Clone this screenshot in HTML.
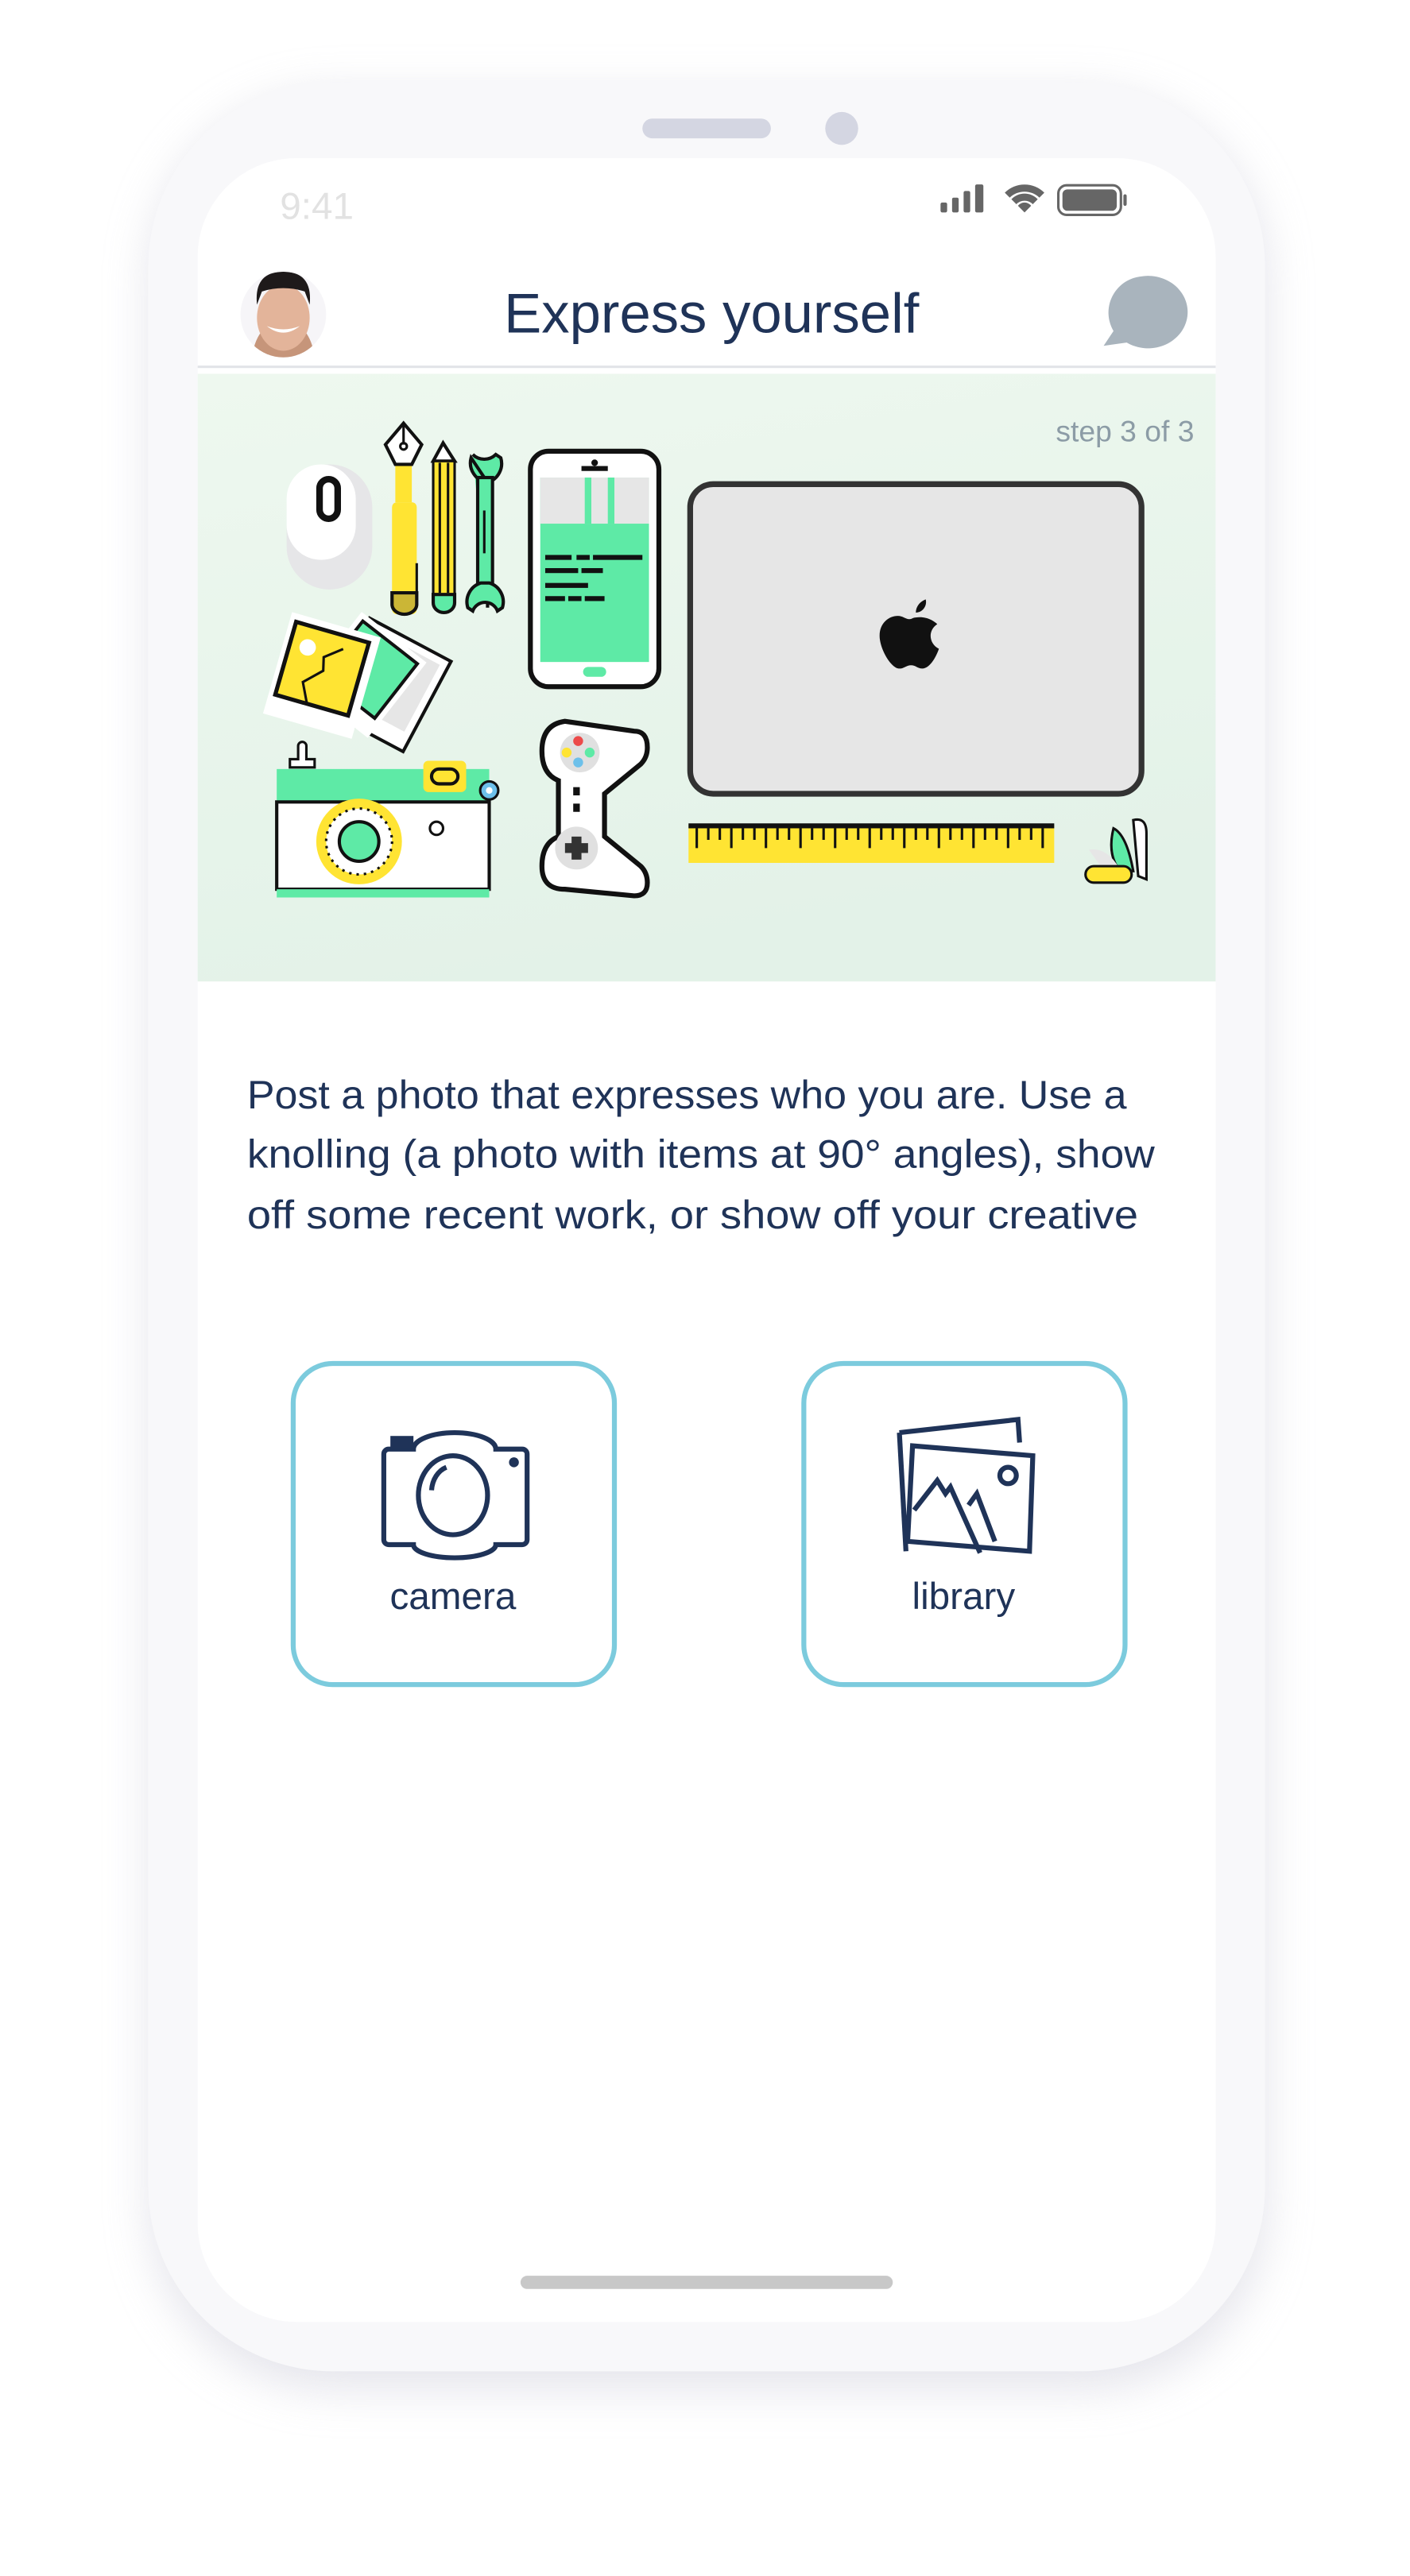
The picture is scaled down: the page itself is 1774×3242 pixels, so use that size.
<!DOCTYPE html>
<html><head><meta charset="utf-8"><style>
html,body{margin:0;padding:0;background:#fff;}
svg{display:block}
</style></head><body>
<svg width="1774" height="3242" viewBox="0 0 856 1564.3" preserveAspectRatio="none" xmlns="http://www.w3.org/2000/svg" font-family="Liberation Sans, sans-serif">
<defs>
<filter id="sh" x="-20%" y="-20%" width="140%" height="140%"><feGaussianBlur stdDeviation="14"/></filter>
<linearGradient id="gg" x1="0" y1="0" x2="0.3" y2="1"><stop offset="0" stop-color="#eef8ef"/><stop offset="1" stop-color="#e3f2e8"/></linearGradient>
<clipPath id="av"><circle cx="172" cy="191" r="26"/></clipPath>
</defs>
<rect width="856" height="1564.3" fill="#fff"/>
<!-- phone body -->
<rect x="92" y="58" width="676" height="1392" rx="110" fill="#d8d8e2" filter="url(#sh)" opacity="0.7"/>
<rect x="90" y="50" width="678" height="1390" rx="112" fill="#f8f8fa"/>
<rect x="120" y="96" width="618" height="1314" rx="60" fill="#fff"/>
<rect x="390" y="72" width="78" height="12" rx="6" fill="#d4d6e2"/>
<circle cx="511" cy="78" r="10" fill="#d4d6e2"/>
<!-- status -->
<text x="170" y="133" font-size="23" fill="#e2e2e2">9:41</text>
<g fill="#666">
<rect x="571" y="123" width="4" height="6" rx="1"/><rect x="578" y="120" width="4" height="9" rx="1"/><rect x="585" y="116" width="4" height="13" rx="1"/><rect x="592" y="112" width="5" height="17" rx="1"/>
<path d="M610 117 a17 17 0 0 1 24 0 l-3 3 a13 13 0 0 0 -18 0z M614 121 a11 11 0 0 1 16 0 l-3 3 a7 7 0 0 0 -10 0z M618 125 l4 4 l4 -4 a5 5 0 0 0 -8 0z"/>
<rect x="642.5" y="112.5" width="38" height="18" rx="5" fill="none" stroke="#666" stroke-width="1.5"/>
<rect x="645" y="115" width="33" height="13" rx="3"/>
<rect x="682" y="118" width="2" height="7" rx="1"/>
</g>
<!-- header -->
<circle cx="172" cy="191" r="26" fill="#f6f5f8"/>
<g clip-path="url(#av)">
<path d="M152 230 q0 -22 8 -30 l24 0 q8 8 8 30z" fill="#c6957a"/>
<ellipse cx="172" cy="193" rx="16" ry="20" fill="#e3b49a"/>
<path d="M156 185 q-2 -20 16 -20 q18 0 16 20 l-3 -8 q-13 -4 -26 0z" fill="#1e1a1a"/>
<path d="M162 198 q10 8 20 0 q-10 4 -20 0z" fill="#fff"/>
</g>
<text x="432" y="202" font-size="34" fill="#1f3358" text-anchor="middle" textLength="252" lengthAdjust="spacingAndGlyphs">Express yourself</text>
<path d="M692 168 a24 22 0 1 1 -8 40 l-14 2 l6 -9 a22 22 0 0 1 16 -33z" fill="#a9b4bd"/>
<rect x="120" y="222" width="618" height="1.5" fill="#e2e4e8"/>
<!-- green area -->
<rect x="120" y="227" width="618" height="369" fill="url(#gg)"/>
<text x="725" y="268" font-size="18" fill="#8c9ca6" text-anchor="end">step 3 of 3</text>
<!-- mouse -->
<rect x="174" y="282" width="52" height="76" rx="26" fill="#e6e6e8"/>
<rect x="174" y="282" width="42" height="58" rx="21" fill="#fff"/>
<rect x="194" y="291" width="11" height="24" rx="5.5" fill="none" stroke="#111" stroke-width="4"/>
<!-- pen -->
<path d="M245 257 l-11 13 l6 12 l10 0 l6 -12z" fill="#fff" stroke="#111" stroke-width="2"/>
<line x1="245" y1="257" x2="245" y2="270" stroke="#111" stroke-width="1.5"/><circle cx="245" cy="271" r="2" fill="none" stroke="#111" stroke-width="1.5"/>
<rect x="240" y="283" width="10" height="22" fill="#ffe433"/>
<rect x="238" y="305" width="15" height="68" rx="3" fill="#ffe433"/>
<path d="M238 360 l15 0 l0 7 a7.5 6 0 0 1 -15 0z" fill="#cbb636" stroke="#111" stroke-width="2"/>
<line x1="253" y1="342" x2="253" y2="362" stroke="#111" stroke-width="1.5"/>
<!-- pencil -->
<path d="M263 280 l6 -11 l7 11z" fill="#fff" stroke="#111" stroke-width="2"/>
<rect x="263" y="280" width="13" height="81" fill="#ffe433" stroke="#111" stroke-width="1.5"/>
<line x1="267" y1="281" x2="267" y2="360" stroke="#111" stroke-width="1.5"/><line x1="272" y1="281" x2="272" y2="360" stroke="#111" stroke-width="1.5"/>
<path d="M263 361 l13 0 l0 5 a6.5 6 0 0 1 -13 0z" fill="#5eeaa6" stroke="#111" stroke-width="2"/>
<!-- wrench -->
<path d="M287 276 a10 10 0 0 0 14 0 l3 2 a12 12 0 0 1 -8 15 l0 76 m0 -76 a12 12 0 0 1 -10 -15z" fill="#5eeaa6" stroke="#111" stroke-width="2"/>
<rect x="290" y="290" width="9" height="66" fill="#5eeaa6" stroke="#111" stroke-width="2"/>
<path d="M284 369 a12 12 0 0 1 8 -15 l5 0 a12 12 0 0 1 8 15 l-3 2 a8 8 0 0 0 -15 0z" fill="#5eeaa6" stroke="#111" stroke-width="2"/>
<line x1="294" y1="310" x2="294" y2="336" stroke="#111" stroke-width="1.5"/>
<!-- phone illustration -->
<rect x="322" y="274" width="78" height="143" rx="11" fill="#fff" stroke="#111" stroke-width="3"/>
<rect x="328" y="290" width="66" height="112" fill="#5eeaa6"/>
<rect x="328" y="290" width="66" height="28" fill="#e6e6e6"/>
<rect x="355" y="290" width="4" height="28" fill="#5eeaa6"/><rect x="369" y="290" width="4" height="28" fill="#5eeaa6"/>
<rect x="353" y="283" width="16" height="3" fill="#111"/><circle cx="361" cy="281" r="2" fill="#111"/>
<g fill="#111"><rect x="331" y="337" width="16" height="3"/><rect x="350" y="337" width="8" height="3"/><rect x="360" y="337" width="30" height="3"/>
<rect x="331" y="345" width="20" height="3"/><rect x="353" y="345" width="13" height="3"/>
<rect x="331" y="354" width="26" height="3"/>
<rect x="331" y="362" width="12" height="3"/><rect x="345" y="362" width="8" height="3"/><rect x="355" y="362" width="12" height="3"/></g>
<rect x="354" y="405" width="14" height="6" rx="3" fill="#5eeaa6"/>
<!-- laptop -->
<rect x="419" y="294" width="274" height="188" rx="14" fill="#e6e6e6" stroke="#333" stroke-width="3.5"/>
<path d="M556 375 c6 -1 11 2 13 4 c-6 4 -5 12 1 15 c-2 6 -6 12 -10 12 c-3 0 -4 -2 -7 -2 c-3 0 -4 2 -7 2 c-5 0 -12 -12 -12 -20 c0 -8 6 -12 11 -12 c3 0 5 2 7 2 c2 0 2 -1 4 -1z M556 372 c0 -4 3 -7 6 -8 c1 4 -2 8 -6 8z" fill="#111"/>
<!-- ruler -->
<rect x="418" y="501" width="222" height="23" fill="#ffe433"/>
<rect x="418" y="500" width="222" height="3" fill="#111"/>
<g stroke="#111" stroke-width="1.5">
<path d="M423 503v12M430 503v7M437 503v7M444 503v12M451 503v7M458 503v7M465 503v12M472 503v7M479 503v7M486 503v12M493 503v7M500 503v7M507 503v12M514 503v7M521 503v7M528 503v12M535 503v7M542 503v7M549 503v12M556 503v7M563 503v7M570 503v12M577 503v7M584 503v7M591 503v12M598 503v7M605 503v7M612 503v12M619 503v7M626 503v7M633 503v12"/></g>
<!-- knife -->
<path d="M688 498 q8 -2 8 8 l0 28 l-5 -2z" fill="#fff" stroke="#111" stroke-width="1.5"/>
<path d="M676 503 q8 4 12 26 l-8 0 q-8 -10 -4 -26z" fill="#5eeaa6" stroke="#111" stroke-width="1.5"/>
<path d="M661 516 q12 -2 20 14 l-10 0z" fill="#e6e6e6"/>
<rect x="659" y="526" width="28" height="10" rx="5" fill="#ffe433" stroke="#111" stroke-width="1.5"/>
<!-- photos -->
<g transform="rotate(28 235 415)"><rect x="207" y="385" width="56" height="62" fill="#fff" stroke="#111" stroke-width="2"/><rect x="212" y="390" width="46" height="46" fill="#e6e6e6"/></g>
<g transform="rotate(38 220 410)"><rect x="196" y="380" width="50" height="58" fill="#fff"/><rect x="200" y="384" width="42" height="42" fill="#5eeaa6" stroke="#111" stroke-width="2"/></g>
<g transform="rotate(16 195 408)"><rect x="168" y="378" width="56" height="64" fill="#fff"/><rect x="172" y="383" width="46" height="46" fill="#ffe433" stroke="#111" stroke-width="2.5"/>
<circle cx="183" cy="396" r="5" fill="#fff"/><path d="M192 429 l-6 -12 l10 -10 l-2 -8 l10 -8" fill="none" stroke="#111" stroke-width="1.5"/></g>
<!-- camera -->
<path d="M176 466 l0 -5 l5 0 l0 -8 a2 2 0 0 1 5 0 l0 8 l5 0 l0 5z" fill="#fff" stroke="#111" stroke-width="1.5"/>
<rect x="168" y="467" width="129" height="20" fill="#5eeaa6"/>
<rect x="257" y="462" width="26" height="19" rx="3" fill="#ffe433"/>
<rect x="262" y="467" width="16" height="9" rx="4.5" fill="none" stroke="#111" stroke-width="2"/>
<circle cx="297" cy="480" r="5.5" fill="#6dc0ea" stroke="#111" stroke-width="1.5"/><circle cx="297" cy="480" r="2" fill="#fff"/>
<rect x="168" y="487" width="129" height="53" fill="#fff" stroke="#111" stroke-width="2"/>
<rect x="168" y="540" width="129" height="5" fill="#5eeaa6"/>
<circle cx="218" cy="511" r="26" fill="#ffe433"/><circle cx="218" cy="511" r="20" fill="#fff" stroke="#111" stroke-width="1.5" stroke-dasharray="1.5 3"/>
<circle cx="218" cy="511" r="12" fill="#5eeaa6" stroke="#111" stroke-width="2"/>
<circle cx="265" cy="503" r="4" fill="none" stroke="#111" stroke-width="1.5"/>
<!-- gamepad -->
<path d="M343 438 q-14 2 -14 18 q0 14 10 18 l0 34 q-10 4 -10 18 q0 14 14 14 l42 4 q8 0 8 -8 q0 -6 -4 -10 l-22 -18 l0 -26 l22 -18 q4 -4 4 -10 q0 -10 -8 -10z" fill="#fff" stroke="#111" stroke-width="3"/>
<circle cx="352" cy="457" r="12" fill="#e0e0e0"/>
<circle cx="351" cy="450" r="3" fill="#ec4a4a"/><circle cx="344" cy="457" r="3" fill="#ffe433"/><circle cx="358" cy="457" r="3" fill="#5eeaa6"/><circle cx="351" cy="463" r="3" fill="#6dc0ea"/>
<rect x="348" y="478" width="4" height="5" fill="#111"/><rect x="348" y="488" width="4" height="5" fill="#111"/>
<circle cx="350" cy="515" r="13" fill="#e0e0e0"/>
<path d="M347 508h6v4h4v6h-4v4h-6v-4h-4v-6h4z" fill="#333"/>
<!-- paragraph -->
<g font-size="24" fill="#1f3358">
<text x="150" y="673" textLength="534" lengthAdjust="spacingAndGlyphs">Post a photo that expresses who you are. Use a</text>
<text x="150" y="709" textLength="551" lengthAdjust="spacingAndGlyphs">knolling (a photo with items at 90° angles), show</text>
<text x="150" y="746" textLength="541" lengthAdjust="spacingAndGlyphs">off some recent work, or show off your creative</text>
</g>
<!-- buttons -->
<rect x="178" y="828" width="195" height="195" rx="24" fill="#fff" stroke="#7ccbdd" stroke-width="3"/>
<rect x="488" y="828" width="195" height="195" rx="24" fill="#fff" stroke="#7ccbdd" stroke-width="3"/>
<g fill="none" stroke="#1f3358" stroke-width="3">
<path d="M236 880 l15 0 a25 10 0 0 1 50 0 l16 0 a3 3 0 0 1 3 3 l0 52 a3 3 0 0 1 -3 3 l-16 0 a25 8 0 0 1 -50 0 l-15 0 a3 3 0 0 1 -3 -3 l0 -52 a3 3 0 0 1 3 -3z"/>
<ellipse cx="275" cy="908" rx="21" ry="24"/>
<path d="M262 905 a13 16 0 0 1 9 -14"/>
<path d="M546 870 l72 -8 l1 14"/>
<path d="M546 870 l4 72"/>
<path d="M554 878 l73 6 l-2 58 l-74 -6z"/>
<path d="M555 917 l14 -18 l5 8 l3 -4 l18 40"/>
<path d="M588 914 l5 -7 l11 29"/>
<circle cx="612" cy="896" r="5"/>
</g>
<rect x="237" y="872" width="14" height="8" fill="#1f3358"/>
<circle cx="312" cy="888" r="3" fill="#1f3358"/>
<g font-size="23" fill="#1f3358" text-anchor="middle">
<text x="275" y="977">camera</text>
<text x="585" y="977">library</text>
</g>
<rect x="316" y="1382" width="226" height="8" rx="4" fill="#c8c8c8"/>
</svg>
</body></html>
